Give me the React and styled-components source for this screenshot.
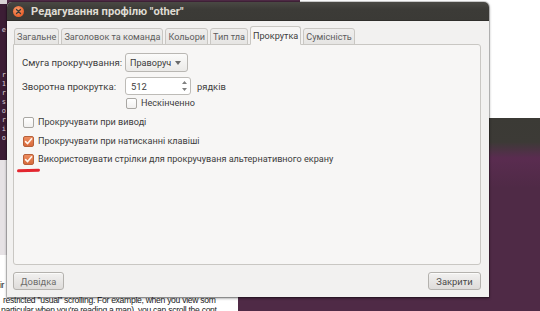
import React from "react";
import styled, { createGlobalStyle } from "styled-components";

const Global = createGlobalStyle`
  html, body { margin: 0; padding: 0; }
  body { width: 540px; height: 311px; overflow: hidden; background: #4e2a45; }
  #root { width: 540px; height: 311px; }
`;

const UI_FONT = `Roboto, "Noto Sans", "DejaVu Sans", sans-serif`;

const Desktop = styled.div`
  position: relative;
  width: 540px;
  height: 311px;
  overflow: hidden;
  background: #4f2a46;
  font-family: ${UI_FONT};
`;

const Terminal = styled.div`
  position: absolute;
  left: -120px;
  top: 0;
  width: 127px;
  height: 160px;
  background: #3c1d35;
  border-top: 4px solid #d8d2d6;
  box-sizing: border-box;
  display: flex;
  flex-direction: column;
  align-items: flex-end;
  padding-top: 18px;
  font-family: "DejaVu Sans Mono", monospace;
  font-size: 7px;
  line-height: 9px;
  color: #d9cfd6;
`;

const TermLine = styled.div`
  height: 9px;
  padding-right: 1px;
`;

const Gap = styled.div`
  height: ${(p) => p.$h}px;
`;

const GreyPane = styled.div`
  position: absolute;
  left: 0;
  top: 160px;
  width: 10px;
  height: 95px;
  background: #e6e2e5;
`;

const DocPage = styled.div`
  position: absolute;
  left: 0;
  top: 255px;
  width: 238px;
  height: 60px;
  background: #ffffff;
  font-family: "Liberation Sans", Arial, sans-serif;
  font-size: 8.6px;
  letter-spacing: -0.3px;
  color: #222;
  display: flex;
  flex-direction: column;
  padding-top: 25px;
  box-sizing: border-box;
  white-space: nowrap;
  line-height: 10px;
`;

const DocLine = styled.div`
  padding-left: ${(p) => p.$indent || 0}px;
  margin-top: ${(p) => p.$mt || 0}px;
`;

const TopPage = styled.div`
  position: absolute;
  left: 300px;
  top: 0;
  width: 240px;
  height: 118px;
  background: #ffffff;
`;

const OtherTerm = styled.div`
  position: absolute;
  left: 300px;
  top: 118px;
  width: 240px;
  height: 200px;
  background: linear-gradient(#3b3a35 0px, #3c3a36 24px, #5a2c50 40px, #4f2a46 70px);
`;

const Dialog = styled.div`
  position: absolute;
  left: 7px;
  top: 2px;
  width: 482px;
  height: 295px;
  display: flex;
  flex-direction: column;
  border-radius: 5px 5px 0 0;
  overflow: hidden;
  background: #f2f1f0;
  box-shadow: 0 1px 3px rgba(0, 0, 0, 0.55), 0 0 0 1px rgba(0, 0, 0, 0.15);
`;

const TitleBar = styled.div`
  height: 19px;
  flex: none;
  display: flex;
  align-items: center;
  gap: 7px;
  padding-left: 6px;
  background: linear-gradient(#4a4944, #3c3b37 40%, #3b3a36);
  border-bottom: 1px solid #2f2e2b;
  box-sizing: border-box;
`;

const CloseBtn = styled.div`
  width: 11px;
  height: 11px;
  border-radius: 50%;
  background: radial-gradient(circle at 40% 35%, #f89a6a, #e8622d 70%);
  display: flex;
  align-items: center;
  justify-content: center;
  flex: none;
`;

const Title = styled.div`
  color: #dfdbd2;
  font-weight: 700;
  font-size: 11.2px;
`;

const Body = styled.div`
  flex: 1;
  display: flex;
  flex-direction: column;
  padding: 6px 8px 7px 6px;
  min-height: 0;
`;

const Tabs = styled.div`
  display: flex;
  align-items: flex-end;
  gap: 2px;
  padding-left: 1px;
  height: 18px;
  margin-bottom: -1px;
  position: relative;
  z-index: 1;
`;

const Tab = styled.div`
  height: ${(p) => (p.$active ? 19 : 17)}px;
  box-sizing: border-box;
  padding: 0 2px;
  display: flex;
  align-items: center;
  font-size: 9.1px;
  color: ${(p) => (p.$active ? "#3c3c3c" : "#5d5d5d")};
  background: ${(p) => (p.$active ? "#f7f6f5" : "linear-gradient(#efeeed, #e6e5e3)")};
  border: 1px solid #c9c7c3;
  border-bottom: ${(p) => (p.$active ? "1px solid #f7f6f5" : "1px solid #c9c7c3")};
  border-radius: 3px 3px 0 0;
  white-space: nowrap;
`;

const Panel = styled.div`
  flex: 1;
  background: #f7f6f5;
  border: 1px solid #c9c7c3;
  border-radius: 0 3px 3px 3px;
  padding: 8px 8px 0 8px;
  display: flex;
  flex-direction: column;
  position: relative;
`;

const FormGrid = styled.div`
  display: grid;
  grid-template-columns: 103px auto;
  row-gap: 5px;
  align-items: center;
`;

const Label = styled.div`
  font-size: 9.6px;
  color: #3c3c3c;
  white-space: nowrap;
`;

const Combo = styled.div`
  width: 63px;
  height: 19px;
  box-sizing: border-box;
  border: 1px solid #b9b7b3;
  border-radius: 3px;
  background: linear-gradient(#fbfbfa, #ebeae8);
  display: flex;
  align-items: center;
  justify-content: space-between;
  padding: 0 6px 0 4px;
  font-size: 9.1px;
  color: #3c3c3c;
  white-space: nowrap;
`;

const SpinRow = styled.div`
  display: flex;
  align-items: center;
  gap: 6px;
`;

const Spin = styled.div`
  width: 66px;
  height: 18px;
  box-sizing: border-box;
  border: 1px solid #bdbbb7;
  border-radius: 3px;
  background: #ffffff;
  display: flex;
  align-items: center;
  justify-content: space-between;
  padding: 0 3px 0 5px;
  font-size: 9.4px;
  color: #3c3c3c;
`;

const Unit = styled.span`
  font-size: 9.4px;
  color: #3c3c3c;
`;

const CheckRow = styled.div`
  display: flex;
  align-items: center;
  gap: 3px;
  height: 14px;
  margin-top: ${(p) => p.$mt || 0}px;
  padding-left: ${(p) => p.$pl || 0}px;
  font-size: 9.1px;
  color: #3c3c3c;
  white-space: nowrap;
`;

const Box = styled.div`
  width: 11px;
  height: 11px;
  box-sizing: border-box;
  border-radius: 2px;
  border: 1px solid ${(p) => (p.$checked ? "#b6603a" : "#a9a7a3")};
  background: ${(p) => (p.$checked ? "linear-gradient(#ee8d5f, #d86a3c)" : "linear-gradient(#ffffff, #f1f0ef)")};
  display: flex;
  align-items: center;
  justify-content: center;
  flex: none;
  margin-right: 1px;
`;

const Underline = styled.div`
  position: absolute;
  left: 3px;
  top: 124px;
  width: 23px;
  height: 3px;
  border-radius: 2px;
  background: #e3262f;
  transform: rotate(-2deg);
`;

const Footer = styled.div`
  display: flex;
  justify-content: space-between;
  margin-top: 7px;
`;

const Button = styled.div`
  height: 18px;
  width: ${(p) => p.$w}px;
  box-sizing: border-box;
  border: 1px solid #b4b2ae;
  border-radius: 3px;
  background: linear-gradient(#f2f1f0, #dedcda);
  box-shadow: inset 0 1px 0 rgba(255, 255, 255, 0.7);
  display: flex;
  align-items: center;
  justify-content: center;
  font-size: 9.4px;
  color: ${(p) => (p.$dim ? "#6d6c6a" : "#4a4a4a")};
`;

function Check({ checked }) {
  return (
    <Box $checked={checked}>
      {checked && (
        <svg width="9" height="9" viewBox="0 0 9 9">
          <path d="M1.6 4.6 L3.6 6.6 L7.6 1.8" fill="none" stroke="#fff6ef" strokeWidth="1.6" strokeLinecap="round" strokeLinejoin="round" />
        </svg>
      )}
    </Box>
  );
}

export default function App() {
  return (
    <>
      <Global />
      <Desktop>
        <TopPage />
        <OtherTerm />
        <Terminal>
          <Gap $h={4} />
          <TermLine>e</TermLine>
          <Gap $h={36} />
          <TermLine>r</TermLine>
          <TermLine>1</TermLine>
          <TermLine>r</TermLine>
          <TermLine>s</TermLine>
          <TermLine>o</TermLine>
          <TermLine>r</TermLine>
          <TermLine>i</TermLine>
          <TermLine>o</TermLine>
        </Terminal>
        <GreyPane />
        <DocPage>
          <DocLine>ir</DocLine>
          <DocLine $indent={3} $mt={5}>restricted "usual" scrolling. For example, when you view som</DocLine>
          <DocLine $indent={1}>particular when you're reading a man), you can scroll the cont</DocLine>
        </DocPage>

        <Dialog>
          <TitleBar>
            <CloseBtn>
              <svg width="7" height="7" viewBox="0 0 7 7">
                <path d="M1.5 1.5 L5.5 5.5 M5.5 1.5 L1.5 5.5" stroke="#3c3b37" strokeWidth="1.3" strokeLinecap="round" />
              </svg>
            </CloseBtn>
            <Title>Редагування профілю "other"</Title>
          </TitleBar>
          <Body>
            <Tabs>
              <Tab>Загальне</Tab>
              <Tab>Заголовок та команда</Tab>
              <Tab>Кольори</Tab>
              <Tab>Тип тла</Tab>
              <Tab $active>Прокрутка</Tab>
              <Tab>Сумісність</Tab>
            </Tabs>
            <Panel>
              <FormGrid>
                <Label>Смуга прокручування:</Label>
                <Combo>
                  <span>Праворуч</span>
                  <svg width="6" height="4" viewBox="0 0 6 4">
                    <path d="M0 0 L6 0 L3 4 Z" fill="#6a6a6a" />
                  </svg>
                </Combo>
                <Label>Зворотна прокрутка:</Label>
                <SpinRow>
                  <Spin>
                    <span>512</span>
                    <svg width="5" height="12" viewBox="0 0 5 12">
                      <path d="M0 4 L2.5 1 L5 4 Z M0 8 L2.5 11 L5 8 Z" fill="#808080" />
                    </svg>
                  </Spin>
                  <Unit>рядків</Unit>
                </SpinRow>
              </FormGrid>
              <CheckRow $mt={1} $pl={104}>
                <Check />
                Нескінченно
              </CheckRow>
              <CheckRow $mt={5} $pl={1}>
                <Check />
                Прокручувати при виводі
              </CheckRow>
              <CheckRow $mt={5} $pl={1}>
                <Check checked />
                Прокручувати при натисканні клавіші
              </CheckRow>
              <CheckRow $mt={4} $pl={1}>
                <Check checked />
                Використовувати стрілки для прокручуваня альтернативного екрану
              </CheckRow>
              <Underline />
            </Panel>
            <Footer>
              <Button $w={51} $dim>Довідка</Button>
              <Button $w={53}>Закрити</Button>
            </Footer>
          </Body>
        </Dialog>
      </Desktop>
    </>
  );
}
